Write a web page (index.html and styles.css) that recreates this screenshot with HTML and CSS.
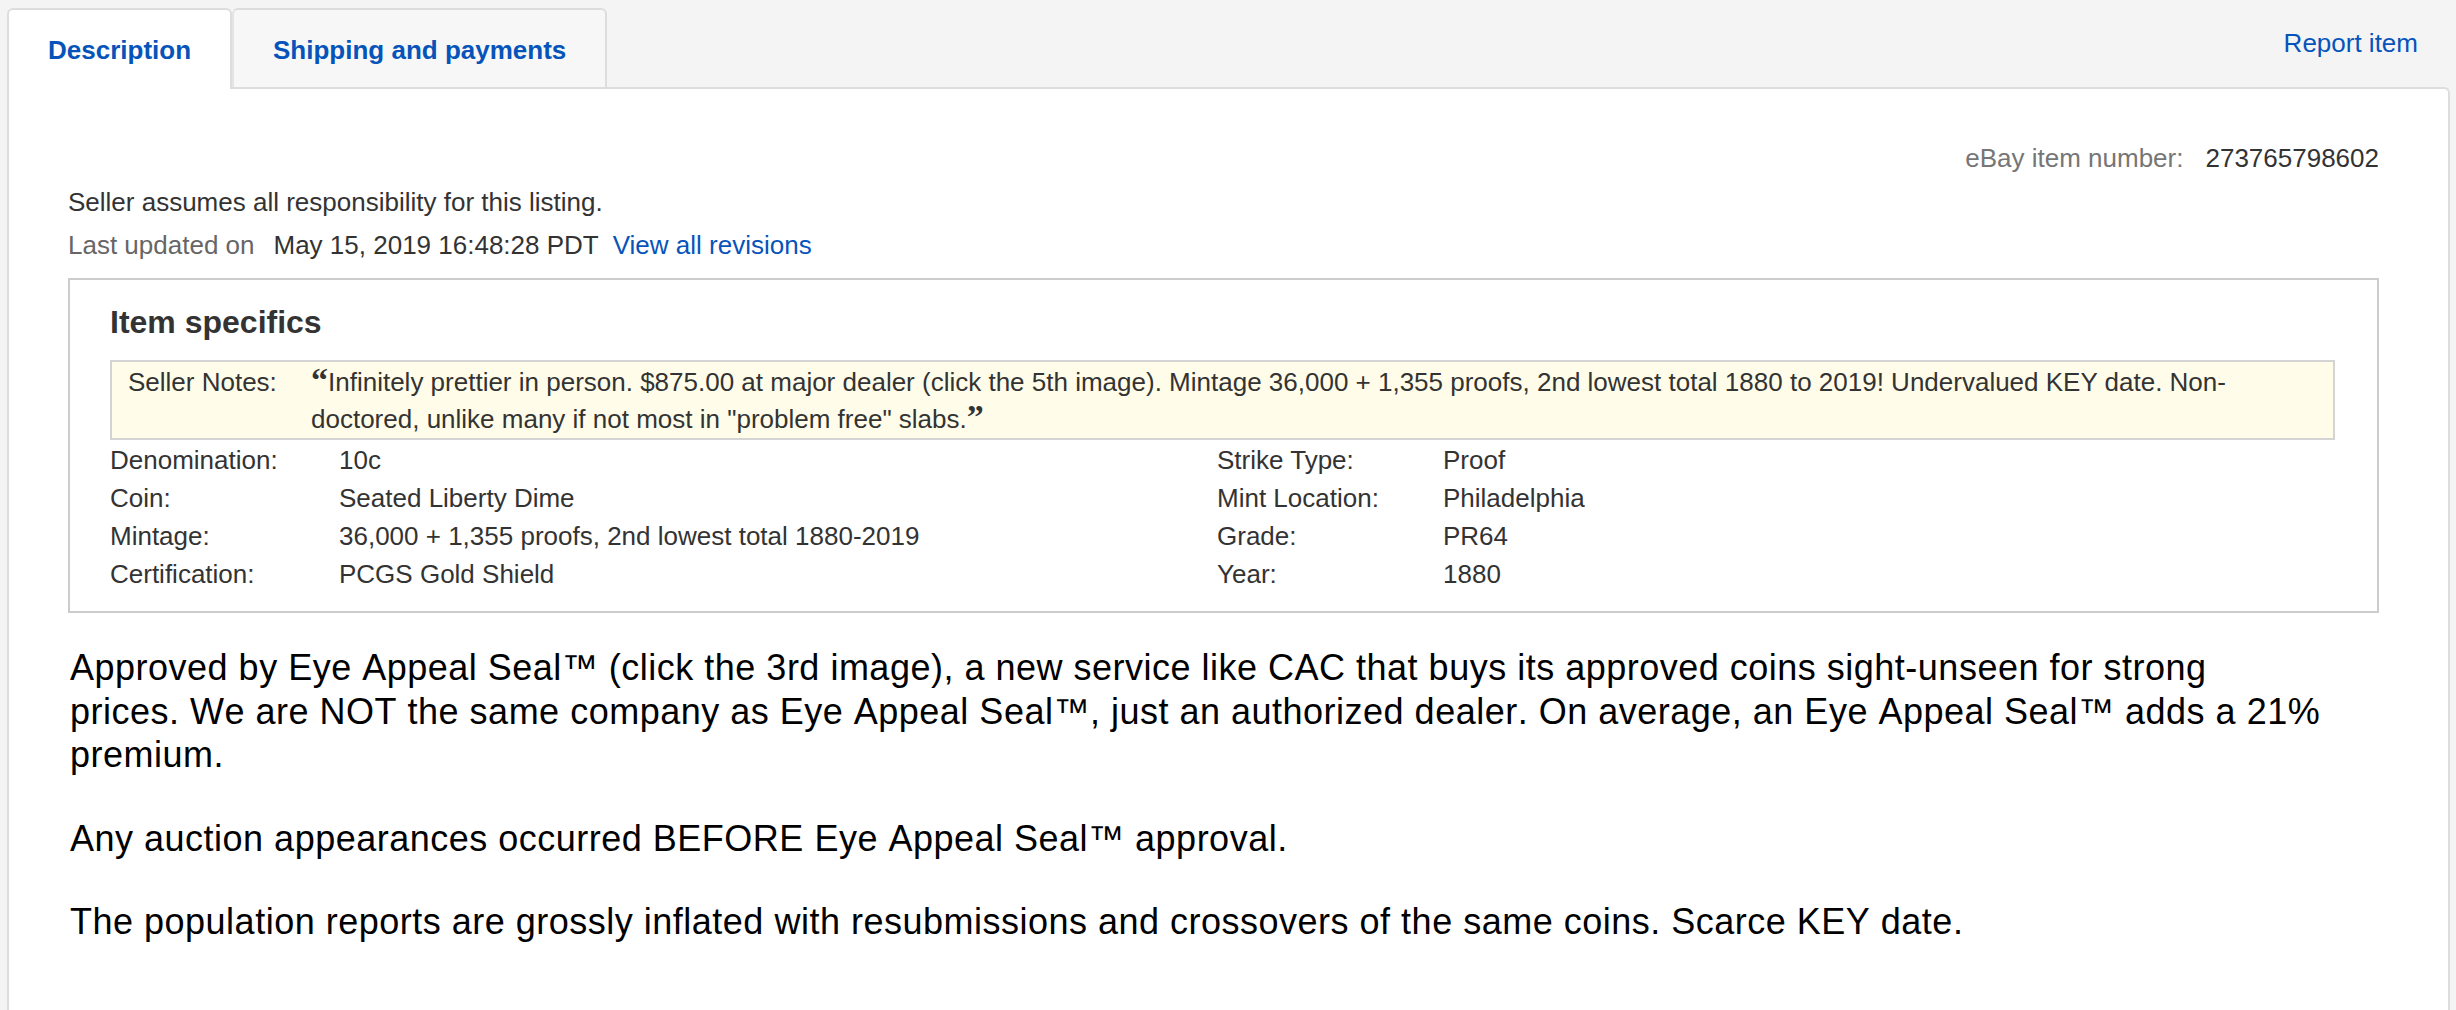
FILE: index.html
```html
<!DOCTYPE html>
<html lang="en">
<head>
  <meta charset="UTF-8">
  <meta name="viewport" content="width=device-width, initial-scale=1.0">
  <title>Item description</title>
  <link rel="stylesheet" href="styles.css">
</head>
<body>
  <div class="tabs-bar">
    <div class="tab tab-active">Description</div>
    <div class="tab">Shipping and payments</div>
    <a class="report-link" href="#">Report item</a>
  </div>
  <div class="panel">
    <div class="item-number">
      <span class="item-number-label">eBay item number:</span><span class="item-number-value">273765798602</span>
    </div>
    <div class="seller-note">Seller assumes all responsibility for this listing.</div>
    <div class="revision-row">
      <span class="revision-label">Last updated on</span><span class="revision-date">May 15, 2019 16:48:28 PDT</span><a class="revision-link" href="#">View all revisions</a>
    </div>

    <div class="specifics">
      <h2 class="specifics-title">Item specifics</h2>
      <div class="notes">
        <div class="notes-label">Seller Notes:</div>
        <div class="notes-text">Infinitely prettier in person. $875.00 at major dealer (click the 5th image). Mintage 36,000 + 1,355 proofs, 2nd lowest total 1880 to 2019! Undervalued KEY date. Non-doctored, unlike many if not most in "problem free" slabs.</div>
      </div>
      <div class="spec-grid">
        <div class="spec-label">Denomination:</div><div class="spec-value">10c</div>
        <div class="spec-label">Strike Type:</div><div class="spec-value">Proof</div>
        <div class="spec-label">Coin:</div><div class="spec-value">Seated Liberty Dime</div>
        <div class="spec-label">Mint Location:</div><div class="spec-value">Philadelphia</div>
        <div class="spec-label">Mintage:</div><div class="spec-value">36,000 + 1,355 proofs, 2nd lowest total 1880-2019</div>
        <div class="spec-label">Grade:</div><div class="spec-value">PR64</div>
        <div class="spec-label">Certification:</div><div class="spec-value">PCGS Gold Shield</div>
        <div class="spec-label">Year:</div><div class="spec-value">1880</div>
      </div>
    </div>

    <div class="description">
      <p>Approved by Eye Appeal Seal&trade; (click the 3rd image), a new service like CAC that buys its approved coins sight-unseen for strong<br>prices. We are NOT the same company as Eye Appeal Seal&trade;, just an authorized dealer. On average, an Eye Appeal Seal&trade; adds a 21% premium.</p>
      <p>Any auction appearances occurred BEFORE Eye Appeal Seal&trade; approval.</p>
      <p>The population reports are grossly inflated with resubmissions and crossovers of the same coins. Scarce KEY date.</p>
    </div>
  </div>
</body>
</html>
```

FILE: styles.css
```css
body {
  margin: 0;
  background-color: #f4f4f4;
  font-family: "Liberation Sans", Arial, sans-serif;
  color: #333;
}
a { color: #0654ba; text-decoration: none; }

/* tabs */
.tabs-bar {
  display: flex;
  align-items: flex-end;
  padding: 8px 38px 0 7px;
}
.tab {
  box-sizing: border-box;
  height: 79px;
  padding: 22px 39px 0;
  border: 2px solid #ddd;
  border-bottom: none;
  border-radius: 6px 6px 0 0;
  background: #f7f7f7;
  color: #0654ba;
  font-size: 26px;
  font-weight: bold;
  line-height: 36px;
  white-space: nowrap;
}
.tab + .tab { border-left-color: #e4e4e4; }
.tab-active {
  position: relative;
  z-index: 1;
  height: 81px;
  margin-bottom: -2px;
  background: #fff;
}
.report-link {
  align-self: flex-start;
  margin-left: auto;
  padding-top: 20px;
  font-size: 26px;
  line-height: 30px;
}

/* panel */
.panel {
  box-sizing: border-box;
  min-height: calc(100vh - 87px);
  margin: 0 6px 0 7px;
  padding: 54px 69px 0 59px;
  border: 2px solid #ddd;
  border-bottom: none;
  border-radius: 0 6px 0 0;
  background: #fff;
  font-size: 26px;
  line-height: 30px;
}
.item-number { text-align: right; }
.item-number-label { color: #767676; margin-right: 22px; }
.item-number-value { color: #333; }
.seller-note { margin-top: 14px; }
.revision-row { margin-top: 13px; }
.revision-label { color: #666; margin-right: 19px; }
.revision-link { margin-left: 14px; }

/* item specifics */
.specifics {
  margin-top: 18px;
  padding: 23px 42px 22px 40px;
  border: 2px solid #ccc;
}
.specifics-title {
  margin: 0 0 19px;
  font-size: 32px;
  line-height: 38px;
  color: #333;
}
.notes {
  display: flex;
  padding: 2px 14px 0 16px;
  border: 2px solid #d4d4d4;
  background: #fffde9;
  line-height: 37px;
}
.notes-label { flex: 0 0 183px; }
.notes-text { flex: 1; }
.notes-text::before,
.notes-text::after {
  font-family: "Liberation Serif", "Times New Roman", serif;
  font-size: 34px;
  font-weight: bold;
  line-height: 0;
}
.notes-text::before { content: "\201C"; }
.notes-text::after { content: "\201D"; }
.spec-grid {
  display: grid;
  grid-template-columns: 229px 878px 226px 1fr;
  row-gap: 8px;
  margin-top: 5px;
}

/* seller description */
.description {
  padding: 33px 46px 0 2px;
  color: #000;
  font-size: 36px;
  line-height: 43.5px;
  letter-spacing: 0.5px;
  font-kerning: none;
}
.description p { margin: 0 0 40px; }
```
